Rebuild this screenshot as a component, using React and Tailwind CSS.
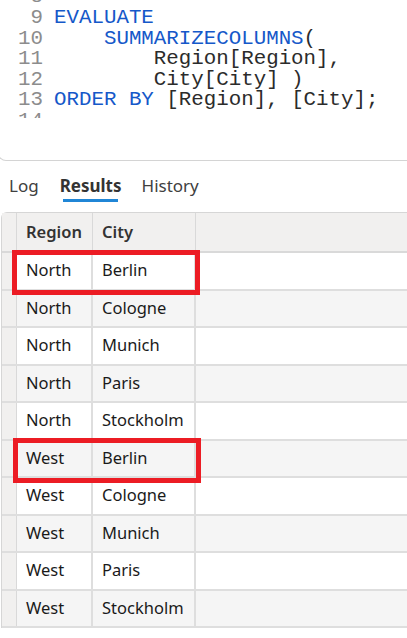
const codeLines = [
  { n: 8, parts: [] },
  { n: 9, parts: [["k", "EVALUATE"]] },
  { n: 10, parts: [["t", "    "], ["k", "SUMMARIZECOLUMNS"], ["t", "("]] },
  { n: 11, parts: [["t", "        Region[Region],"]] },
  { n: 12, parts: [["t", "        City[City] )"]] },
  { n: 13, parts: [["k", "ORDER BY"], ["t", " [Region], [City];"]] },
  { n: 14, parts: [] },
];

const rows = [
  ["North", "Berlin"],
  ["North", "Cologne"],
  ["North", "Munich"],
  ["North", "Paris"],
  ["North", "Stockholm"],
  ["West", "Berlin"],
  ["West", "Cologne"],
  ["West", "Munich"],
  ["West", "Paris"],
  ["West", "Stockholm"],
];

const ui = { fontFamily: '"Noto Sans", "Open Sans", Arial, sans-serif' };
const mono = { fontFamily: '"Liberation Mono", "Courier New", monospace' };

export default function App() {
  return (
    <div className="relative w-[407px] h-[638px] overflow-hidden bg-white" style={ui}>
      {/* EDITOR */}
      <div className="-ml-[2px] h-[161px] border-b border-l border-[#d4d4d4] rounded-bl-[8px] bg-white">
        <div className="h-[118px] overflow-hidden">
          <div className="mt-[-12.7px] text-[20.8px] leading-[20.6px]" style={mono}>
            {codeLines.map((l) => (
              <div key={l.n} className="flex whitespace-pre">
                <span className="w-[44px] text-right text-[#8c8c8c]">{l.n}</span>
                <span className="ml-[11px] text-[#2b2b2b]">
                  {l.parts.map(([kind, txt], i) => (
                    <span key={i} className={kind === "k" ? "text-[#1558c9]" : ""}>
                      {txt}
                    </span>
                  ))}
                </span>
              </div>
            ))}
          </div>
        </div>
      </div>

      {/* TABS */}
      <div className="h-[51px] flex items-start pl-[9px] pt-[12px] text-[17px] text-[#404040]">
        <span>Log</span>
        <span className="relative ml-[21px] font-bold text-[#333]">
          Results
          <span className="absolute left-[3px] right-[4px] top-[26px] h-[3px] bg-[#2086d6]" />
        </span>
        <span className="ml-[20px]">History</span>
      </div>

      {/* TABLE */}
      <div className="border-t border-l border-[#d6d6d6] rounded-tl-[6px] ml-[1px] text-[16.5px] text-[#1a1a1a]">
        <div className="flex h-[40px] bg-[#f1f0ef] border-b-2 border-[#d9d9d9] font-semibold text-[#333]">
          <div className="w-[15px] border-r border-[#d9d9d9]" />
          <div className="w-[76px] flex items-center pl-[9px] border-r border-[#d9d9d9]">Region</div>
          <div className="w-[103px] flex items-center pl-[9px] border-r border-[#d9d9d9]">City</div>
          <div className="flex-1" />
        </div>
        {rows.map(([r, c], i) => (
          <div
            key={i}
            className={`flex h-[37.5px] border-b-2 border-[#dedede] ${i % 2 ? "bg-[#f5f5f5]" : "bg-white"}`}
          >
            <div className="w-[15px] bg-[#f1f0ef] border-r border-[#d9d9d9]" />
            <div className="w-[76px] flex items-center pl-[9px] border-r-2 border-[#dedede]">{r}</div>
            <div className="w-[103px] flex items-center pl-[9px] border-r-2 border-[#dedede]">{c}</div>
            <div className="flex-1" />
          </div>
        ))}
      </div>

      {/* HIGHLIGHT BOXES */}
      <div className="absolute left-[12px] top-[250px] w-[188px] h-[45px] border-[5px] border-[#ec1c24]" />
      <div className="absolute left-[13px] top-[438px] w-[188px] h-[45px] border-[5px] border-[#ec1c24]" />
    </div>
  );
}
